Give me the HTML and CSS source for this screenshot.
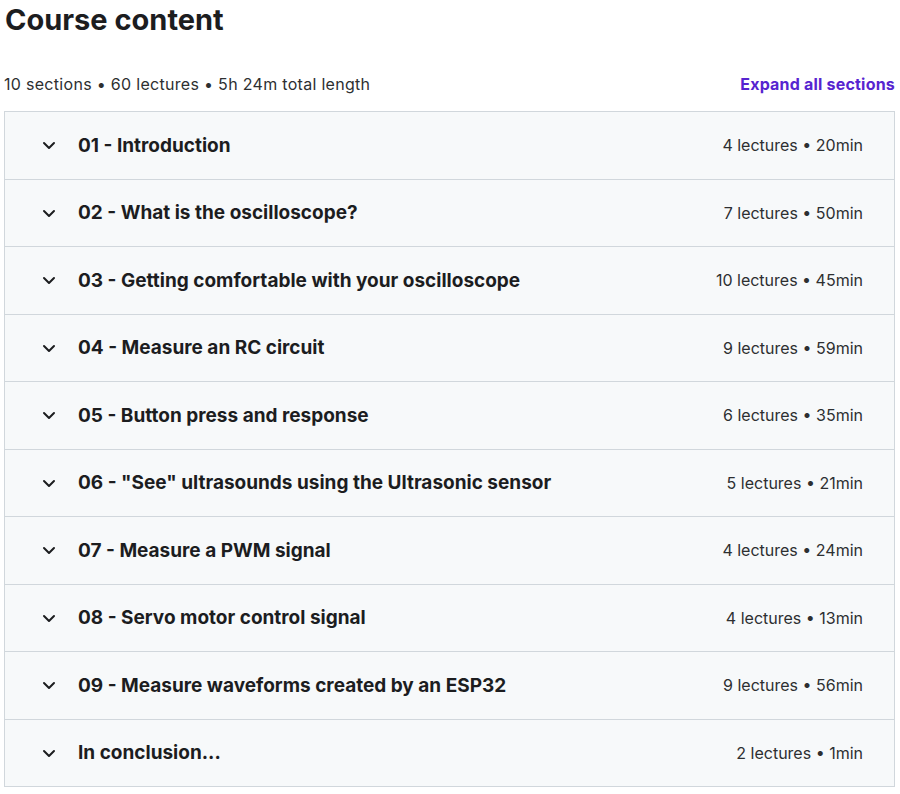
FILE: index.html
```html
<!DOCTYPE html>
<html>
<head>
<meta charset="utf-8">
<link rel="stylesheet" href="styles.css">
</head>
<body>
<div class="page">
  <h2 class="title">Course content</h2>
  <div class="meta">
    <span class="stats">10 sections • 60 lectures • 5h 24m total length</span>
    <button class="expand">Expand all sections</button>
  </div>
  <div class="sections">
    <div class="row"><svg class="chev" viewBox="0 0 24 24"><path d="M7 10l5 5 5-5"/></svg><span class="name">01 - Introduction</span><span class="info">4 lectures • 20min</span></div>
    <div class="row"><svg class="chev" viewBox="0 0 24 24"><path d="M7 10l5 5 5-5"/></svg><span class="name">02 - What is the oscilloscope?</span><span class="info">7 lectures • 50min</span></div>
    <div class="row"><svg class="chev" viewBox="0 0 24 24"><path d="M7 10l5 5 5-5"/></svg><span class="name">03 - Getting comfortable with your oscilloscope</span><span class="info">10 lectures • 45min</span></div>
    <div class="row"><svg class="chev" viewBox="0 0 24 24"><path d="M7 10l5 5 5-5"/></svg><span class="name">04 - Measure an RC circuit</span><span class="info">9 lectures • 59min</span></div>
    <div class="row"><svg class="chev" viewBox="0 0 24 24"><path d="M7 10l5 5 5-5"/></svg><span class="name">05 - Button press and response</span><span class="info">6 lectures • 35min</span></div>
    <div class="row"><svg class="chev" viewBox="0 0 24 24"><path d="M7 10l5 5 5-5"/></svg><span class="name">06 - "See" ultrasounds using the Ultrasonic sensor</span><span class="info">5 lectures • 21min</span></div>
    <div class="row"><svg class="chev" viewBox="0 0 24 24"><path d="M7 10l5 5 5-5"/></svg><span class="name">07 - Measure a PWM signal</span><span class="info">4 lectures • 24min</span></div>
    <div class="row"><svg class="chev" viewBox="0 0 24 24"><path d="M7 10l5 5 5-5"/></svg><span class="name">08 - Servo motor control signal</span><span class="info">4 lectures • 13min</span></div>
    <div class="row"><svg class="chev" viewBox="0 0 24 24"><path d="M7 10l5 5 5-5"/></svg><span class="name">09 - Measure waveforms created by an ESP32</span><span class="info">9 lectures • 56min</span></div>
    <div class="row"><svg class="chev" viewBox="0 0 24 24"><path d="M7 10l5 5 5-5"/></svg><span class="name">In conclusion...</span><span class="info">2 lectures • 1min</span></div>
  </div>
</div>
</body>
</html>
```
FILE: styles.css
```css
html, body {
  margin: 0;
  padding: 0;
  background: #ffffff;
}
body {
  font-family: Inter, "Liberation Sans", sans-serif;
  color: #2d2f31;
}
.page {
  padding: 0 5px 0 4px;
}
.title {
  margin: 0;
  padding-top: 3px;
  padding-left: 1px;
  height: 36px;
  font-size: 29px;
  line-height: 34px;
  font-weight: 700;
  color: #1c1d1f;
}
.meta {
  display: flex;
  justify-content: space-between;
  align-items: center;
  box-sizing: border-box;
  height: 72px;
  padding-top: 18px;
}
.stats {
  font-size: 16px;
  letter-spacing: 0.3px;
  color: #2d2f31;
}
.expand {
  border: none;
  background: none;
  padding: 0;
  font-family: inherit;
  font-size: 16px;
  letter-spacing: 0.2px;
  font-weight: 700;
  color: #5624d0;
}
.sections {
  border: 1px solid #d1d7dc;
  background: #f7f9fa;
}
.row {
  display: flex;
  align-items: center;
  height: 66.5px;
  padding: 0 31px 0 32px;
  border-top: 1px solid #d1d7dc;
}
.row:first-child {
  border-top: none;
}
.chev {
  width: 24px;
  height: 24px;
  flex: none;
  fill: none;
  stroke: #1c1d1f;
  stroke-width: 2;
  stroke-linecap: round;
  stroke-linejoin: round;
  margin-right: 17px;
}
.name {
  flex: 1;
  font-size: 19px;
  font-weight: 700;
  color: #1c1d1f;
}
.info {
  font-size: 16px;
  color: #2d2f31;
}
```
